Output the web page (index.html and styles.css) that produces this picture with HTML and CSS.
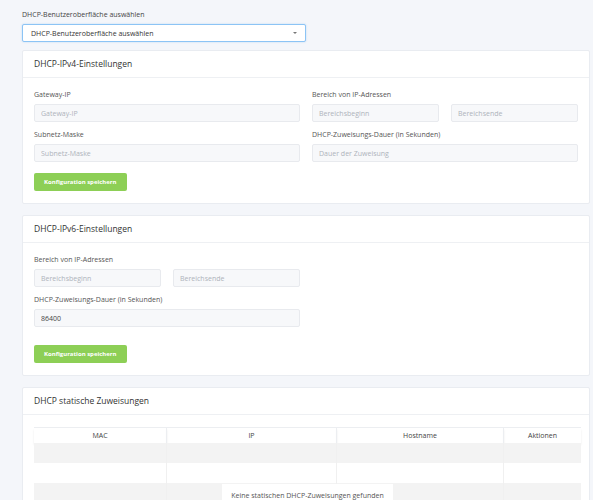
FILE: index.html
```html
<!DOCTYPE html>
<html>
<head>
  <meta charset="UTF-8">
  <title>DHCP-Einstellungen</title>
  <link rel="stylesheet" href="styles.css">
</head>
<body>
  <div class="page">
    <label class="top-label" for="uiSelect">DHCP-Benutzeroberfläche auswählen</label>
    <div class="select-box" id="uiSelect">
      <span>DHCP-Benutzeroberfläche auswählen</span>
      <span class="caret"></span>
    </div>

    <div class="card">
      <div class="card-header">DHCP-IPv4-Einstellungen</div>
      <div class="card-body">
        <div class="grid-2">
          <div>
            <div class="field">
              <label>Gateway-IP</label>
              <input type="text" placeholder="Gateway-IP">
            </div>
            <div class="field">
              <label>Subnetz-Maske</label>
              <input type="text" placeholder="Subnetz-Maske">
            </div>
          </div>
          <div>
            <div class="field">
              <label>Bereich von IP-Adressen</label>
              <div class="pair">
                <input type="text" placeholder="Bereichsbeginn">
                <input type="text" placeholder="Bereichsende">
              </div>
            </div>
            <div class="field">
              <label>DHCP-Zuweisungs-Dauer (in Sekunden)</label>
              <input type="text" placeholder="Dauer der Zuweisung">
            </div>
          </div>
        </div>
        <button class="btn-save">Konfiguration speichern</button>
      </div>
    </div>

    <div class="card">
      <div class="card-header">DHCP-IPv6-Einstellungen</div>
      <div class="card-body">
        <div class="grid-2">
          <div>
            <div class="field">
              <label>Bereich von IP-Adressen</label>
              <div class="pair">
                <input type="text" placeholder="Bereichsbeginn">
                <input type="text" placeholder="Bereichsende">
              </div>
            </div>
            <div class="field">
              <label>DHCP-Zuweisungs-Dauer (in Sekunden)</label>
              <input type="text" value="86400">
            </div>
          </div>
        </div>
        <button class="btn-save btn-spaced">Konfiguration speichern</button>
      </div>
    </div>

    <div class="card">
      <div class="card-header">DHCP statische Zuweisungen</div>
      <div class="card-body">
        <div class="table-wrap">
          <table class="leases">
            <thead>
              <tr>
                <th class="col-mac">MAC</th>
                <th class="col-ip">IP</th>
                <th class="col-host">Hostname</th>
                <th class="col-act">Aktionen</th>
              </tr>
            </thead>
            <tbody>
              <tr><td></td><td></td><td></td><td></td></tr>
              <tr><td></td><td></td><td></td><td></td></tr>
              <tr><td></td><td></td><td></td><td></td></tr>
              <tr><td></td><td></td><td></td><td></td></tr>
            </tbody>
          </table>
          <div class="empty-msg">Keine statischen DHCP-Zuweisungen gefunden</div>
        </div>
      </div>
    </div>
  </div>
</body>
</html>
```

FILE: styles.css
```css
body {
  margin: 0;
  background-color: #f4f6fa;
  font-family: "Open Sans", "Noto Sans", sans-serif;
  color: #444;
}

.page {
  padding: 10px 3px 20px 22px;
}

.top-label {
  display: block;
  font-size: 7px;
  line-height: 10px;
  color: #444;
  margin-bottom: 4px;
}

.select-box {
  width: 284px;
  height: 18px;
  box-sizing: border-box;
  border: 1px solid #8cc4f5;
  border-radius: 2px;
  background-color: #fff;
  display: flex;
  align-items: center;
  justify-content: space-between;
  padding: 0 8px;
  font-size: 7px;
  color: #333;
  margin-bottom: 8px;
  box-shadow: 0 0 2px rgba(100, 170, 240, 0.4);
}

.caret {
  width: 0;
  height: 0;
  border-left: 2px solid transparent;
  border-right: 2px solid transparent;
  border-top: 2px solid #777;
}

.card {
  width: 568px;
  box-sizing: border-box;
  background-color: #fff;
  border: 1px solid #e9ecf1;
  border-radius: 2px;
  margin-bottom: 11px;
}

.card-header {
  padding: 7px 11px;
  font-size: 8.5px;
  line-height: 12px;
  color: #333;
  border-bottom: 1px solid #eef0f3;
}

.card-body {
  padding: 12px 11px 12px;
}

.grid-2 {
  display: grid;
  grid-template-columns: 266px 266px;
  column-gap: 12px;
}

.field {
  margin-bottom: 8px;
}

.field label {
  display: block;
  font-size: 7px;
  line-height: 10px;
  color: #555;
  margin-bottom: 4px;
}

.pair {
  display: grid;
  grid-template-columns: 1fr 1fr;
  column-gap: 12px;
}

input[type="text"] {
  display: block;
  width: 100%;
  height: 18px;
  box-sizing: border-box;
  border: 1px solid #e8eaee;
  border-radius: 2px;
  background-color: #f7f8fa;
  padding: 0 6px;
  font-family: inherit;
  font-size: 7px;
  color: #444;
  outline: none;
}

input::placeholder {
  color: #aeb3ba;
}

.btn-save {
  display: block;
  margin-top: 3px;
  height: 18px;
  padding: 0 10px;
  border: none;
  border-radius: 2px;
  background-color: #8dcf56;
  color: #fff;
  font-family: inherit;
  font-size: 6px;
  font-weight: bold;
  cursor: pointer;
}

.btn-spaced {
  margin-top: 10px;
}

.table-wrap {
  position: relative;
}

.leases {
  width: 100%;
  table-layout: fixed;
  border-collapse: collapse;
  font-size: 7px;
  color: #444;
}

.leases th {
  height: 15px;
  padding: 0;
  font-weight: normal;
  text-align: center;
  border-right: 1px solid #eceef1;
  box-shadow: 0 2px 2px rgba(0, 0, 0, 0.08);
}

.leases th:last-child,
.leases td:last-child {
  border-right: none;
}

.leases thead tr {
  border-top: 1px solid #eceef1;
}

.col-mac { width: 132px; }
.col-ip { width: 169px; }
.col-host { width: 166px; }
.col-act { width: 77px; }

.leases td {
  height: 20px;
  padding: 0;
  border-right: 1px solid #f0f0f0;
}

.leases tbody tr:nth-child(odd) {
  background-color: #f3f3f3;
}

.empty-msg {
  position: absolute;
  top: 57px;
  left: 188px;
  width: 171px;
  height: 30px;
  background-color: #fff;
  font-size: 7px;
  text-align: center;
  line-height: 24px;
  color: #555;
}
```
